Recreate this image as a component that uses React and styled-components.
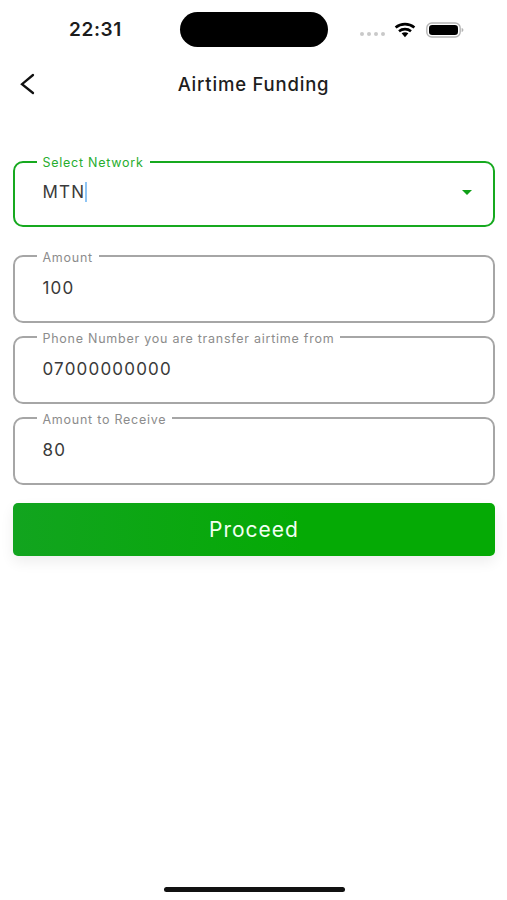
import React from "react";
import styled, { createGlobalStyle } from "styled-components";

const GlobalStyle = createGlobalStyle`
  html, body {
    margin: 0;
    padding: 0;
    background: #fff;
  }
  body {
    font-family: Inter, "Liberation Sans", sans-serif;
    color: #222;
  }
`;

const Page = styled.div`
  width: 507px;
  height: 900px;
  display: flex;
  flex-direction: column;
  overflow: hidden;
  background: #fff;
`;

const StatusBar = styled.div`
  display: grid;
  grid-template-columns: 180px 148px 1fr;
  align-items: center;
  padding-top: 12px;
  height: 35px;
`;

const Time = styled.div`
  padding-left: 69px;
  font-size: 19px;
  font-weight: 600;
  color: #1c1c1c;
  letter-spacing: 0.6px;
`;

const Island = styled.div`
  height: 35px;
  background: #000;
  border-radius: 18px;
`;

const StatusIcons = styled.div`
  display: flex;
  align-items: center;
  padding-left: 32px;
`;

const SignalDots = styled.div`
  display: flex;
  gap: 3px;
  margin: 8px 9px 0 0;

  span {
    width: 4px;
    height: 4px;
    border-radius: 50%;
    background: #c9c9c9;
  }
`;

const Header = styled.header`
  display: grid;
  grid-template-columns: 1fr auto 1fr;
  align-items: center;
  height: 30px;
  margin-top: 22px;
  padding-left: 19px;
  padding-right: 19px;
`;

const BackButton = styled.button`
  width: 18px;
  height: 24px;
  padding: 0;
  border: 0;
  background: none;
  display: flex;
`;

const Title = styled.h1`
  margin: 0;
  font-size: 18.5px;
  font-weight: 500;
  letter-spacing: 0.8px;
  color: #1d1d1d;
`;

const Form = styled.form`
  display: flex;
  flex-direction: column;
  gap: 5px;
  margin-top: 55px;
  padding: 0 12px 0 13px;
`;

const Field = styled.fieldset`
  box-sizing: border-box;
  height: ${(p) => (p.$active ? 73 : 76)}px;
  margin: 0 0 ${(p) => (p.$active ? 15 : 0)}px;
  padding: 0 21.5px;
  min-width: 0;
  border: 2px solid ${(p) => (p.$active ? "#16a91f" : "#a6a6a6")};
  border-radius: 10px;
`;

const Legend = styled.legend`
  padding: ${(p) => (p.$active ? 2 : 4)}px 6px 0;
  font-size: 12.5px;
  line-height: 14px;
  letter-spacing: 0.75px;
  color: ${(p) => (p.$active ? "#27ad2e" : "#8c8c8c")};
`;

const ValueRow = styled.div`
  display: flex;
  align-items: center;
  justify-content: space-between;
  height: 26px;
  margin-top: ${(p) => (p.$active ? 9 : 9.5)}px;
  padding-left: 6px;
  font-size: 17px;
  letter-spacing: 1.2px;
  color: #3a3a3a;
`;

const Caret = styled.span`
  display: inline-block;
  width: 2px;
  height: 20px;
  background: #8ec5f5;
  vertical-align: -4px;
`;

const DropArrow = styled.span`
  width: 0;
  height: 0;
  border-left: 5.5px solid transparent;
  border-right: 5.5px solid transparent;
  border-top: 5.5px solid #0f9f17;
`;

const SubmitButton = styled.button`
  height: 53px;
  margin-top: 13px;
  padding: 0;
  border: 0;
  border-radius: 5px;
  background: linear-gradient(90deg, #12a41f 0%, #05aa05 60%);
  box-shadow: 0 6px 14px rgba(0, 0, 0, 0.07);
  color: #f2fff2;
  font-family: inherit;
  font-size: 21px;
  font-weight: 400;
  letter-spacing: 1px;
`;

const HomeIndicator = styled.div`
  align-self: center;
  width: 181px;
  height: 5px;
  margin-top: auto;
  margin-bottom: 8px;
  margin-left: 1px;
  border-radius: 3px;
  background: #111;
`;

function WifiIcon() {
  return (
    <svg width="22" height="16" viewBox="0 0 22 16" fill="none" stroke="#000" strokeWidth="2.6">
      <path d="M1.6 5.6C7 1 15 1 20.4 5.6" />
      <path d="M5 9.2C8.4 6.4 13.6 6.4 17 9.2" />
      <path d="M7.6 11.2L11 15.2L14.4 11.2C12.4 9.8 9.6 9.8 7.6 11.2Z" fill="#000" stroke="none" />
    </svg>
  );
}

function BatteryIcon() {
  return (
    <svg width="38" height="16" viewBox="0 0 38 16" style={{ marginLeft: 10 }}>
      <rect x="0.8" y="1" width="33.4" height="14" rx="5" fill="none" stroke="#b5b5b5" strokeWidth="1.4" />
      <rect x="3" y="3" width="29" height="10" rx="3.2" fill="#000" />
      <path d="M35.6 6v4c1.2-.4 1.8-1.1 1.8-2s-.6-1.6-1.8-2z" fill="#b5b5b5" />
    </svg>
  );
}

function BackIcon() {
  return (
    <svg width="18" height="24" viewBox="0 0 18 24" fill="none" stroke="#111" strokeWidth="2.3" strokeLinecap="round">
      <path d="M14 3L3 12.2L14 21" />
    </svg>
  );
}

function App() {
  const fields = [
    { label: "Amount", value: "100" },
    { label: "Phone Number you are transfer airtime from", value: "07000000000" },
    { label: "Amount to Receive", value: "80" },
  ];

  return (
    <Page>
      <GlobalStyle />
      <StatusBar>
        <Time>22:31</Time>
        <Island />
        <StatusIcons>
          <SignalDots>
            <span />
            <span />
            <span />
            <span />
          </SignalDots>
          <WifiIcon />
          <BatteryIcon />
        </StatusIcons>
      </StatusBar>

      <Header>
        <BackButton type="button" aria-label="Back">
          <BackIcon />
        </BackButton>
        <Title>Airtime Funding</Title>
        <span />
      </Header>

      <Form>
        <Field $active>
          <Legend $active>Select Network</Legend>
          <ValueRow $active>
            <span>
              MTN
              <Caret />
            </span>
            <DropArrow />
          </ValueRow>
        </Field>
        {fields.map((field) => (
          <Field key={field.label}>
            <Legend>{field.label}</Legend>
            <ValueRow>{field.value}</ValueRow>
          </Field>
        ))}
        <SubmitButton type="button">Proceed</SubmitButton>
      </Form>

      <HomeIndicator />
    </Page>
  );
}

export default App;
